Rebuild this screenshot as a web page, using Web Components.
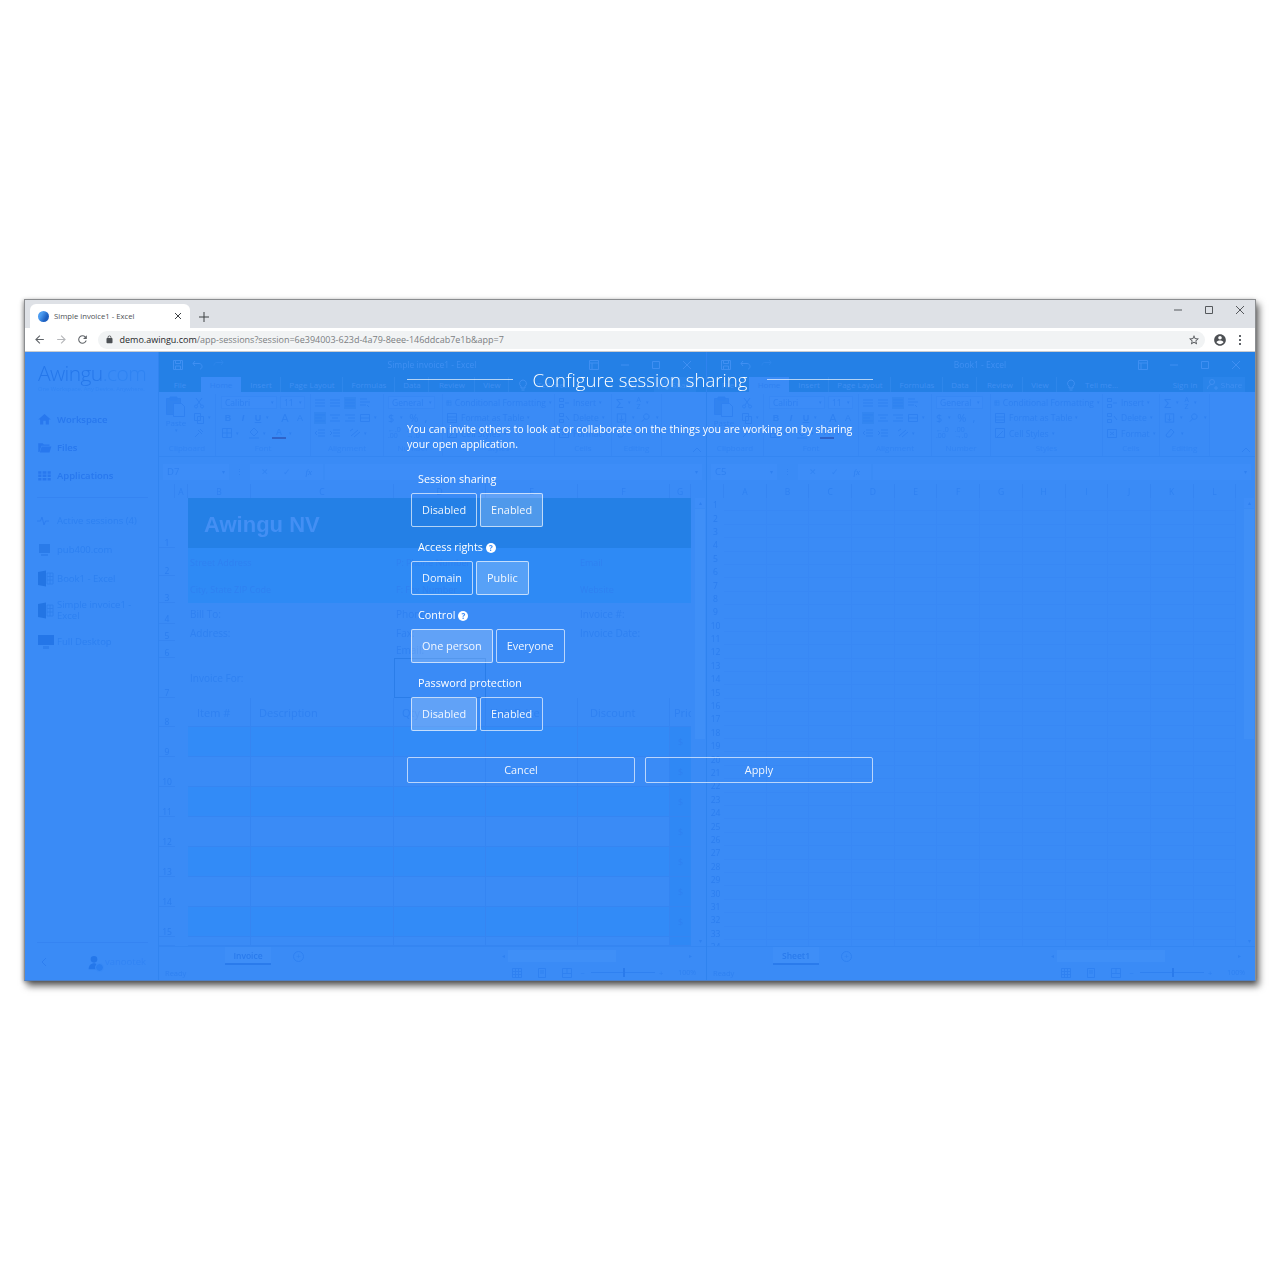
<!DOCTYPE html>
<html>
<head>
<meta charset="utf-8">
<title>Configure session sharing</title>
<style>
  body{
    margin:0;
    padding:299px 24px 0;
    min-height:1280px;
    box-sizing:border-box;
    background:#fff;
    font-family:"Open Sans","Liberation Sans",sans-serif;
    overflow:hidden;
  }
</style>
</head>
<body>
<browser-window>
  <awingu-desktop>
    <awingu-sidebar></awingu-sidebar>
    <excel-pane name="Simple invoice1 - Excel" sheet="Invoice" namebox="D7" tabx="66"><invoice-sheet></invoice-sheet></excel-pane>
    <excel-pane name="Book1 - Excel" sheet="Sheet1" namebox="C5" tabx="66"><blank-sheet></blank-sheet></excel-pane>
    <session-dialog></session-dialog>
  </awingu-desktop>
</browser-window>

<script>
const path = (d, size, vb = 24) => `<svg width="${size}" height="${size}" viewBox="0 0 ${vb} ${vb}" fill="currentColor"><path d="${d}"/></svg>`
const line = (d, w = 12, h = 12) => `<svg width="${w}" height="${h}" viewBox="0 0 ${w} ${h}" fill="none" stroke="currentColor" stroke-width="1"><path d="${d}"/></svg>`

class BrowserWindow extends HTMLElement {
    constructor(){
        super();
        this._shadowDom = this.attachShadow({mode:"open"})
    }
    connectedCallback() {
        this._shadowDom.innerHTML = `
        <style>
            :host{display:flex;flex-direction:column;width:1232px;height:682px;box-sizing:border-box;border:1px solid #8b8d90;border-bottom-color:#4b7fc7;box-shadow:3px 5px 7px rgba(0,0,0,.6),-1px 1px 4px rgba(0,0,0,.3);background:#fff}
            .strip{height:28px;background:#dee1e6;display:flex;align-items:flex-end;position:relative;flex:none;color:#45484c}
            .tab{width:160px;height:24px;margin-left:5px;background:#fff;border-radius:6px 6px 0 0;display:flex;align-items:center;box-sizing:border-box;padding:0 6px 0 8px;font-size:7.700px;color:#4d5054}
            .fav{width:11px;height:11px;border-radius:50%;background:linear-gradient(120deg,#4a9bf0 30%,#1c5fc0 70%);margin-right:5px;flex:none}
            .tab span{flex:1;white-space:nowrap}
            .tab svg{color:#3c4043}
            .plus{margin:0 0 5px 8px;color:#3c4043;display:flex}
            .ctrl{margin-left:auto;display:flex;align-self:flex-start;margin-top:4px;color:#55585c}
            .ctrl div{width:31px;height:12px;display:flex;justify-content:center;align-items:center}
            .bar{height:24px;flex:none;display:flex;align-items:center;background:#fff;color:#5f6368;border-bottom:1px solid #c9ccd0;box-sizing:border-box}
            .nav{width:21.5px;display:flex;justify-content:center}
            .nav.off{color:#b4b6b9}
            .omni{width:1107px;height:18px;margin-left:4px;border-radius:9px;background:#f1f3f4;display:flex;align-items:center;box-sizing:border-box;padding:0 5px 0 7px;font-size:9px;color:#7b7e82;white-space:nowrap}
            .omni b{font-weight:400;color:#25272a}
            .omni .lock{margin-right:6px;display:flex;color:#4d5054}
            .omni .star{margin-left:auto;display:flex;color:#4d5054}
            .prof{margin-left:8px;display:flex;color:#4d5054}
            .dots{margin-left:12px;display:flex;flex-direction:column;gap:2px}
            .dots i{width:2px;height:2px;background:#5f6368;display:block}
            .view{flex:1;min-height:0;display:flex}
        </style>
        <div class="strip">
            <div class="tab"><i class="fav"></i><span>Simple invoice1 - Excel</span>${line("M3 3l6 6M9 3l-6 6")}</div>
            <div class="plus">${line("M6 1v10M1 6h10")}</div>
            <div class="ctrl">
                <div>${line("M2 6h8")}</div>
                <div>${line("M2.5 2.5h7v7h-7z")}</div>
                <div>${line("M2 2l8 8M10 2l-8 8")}</div>
            </div>
        </div>
        <div class="bar">
            <div class="nav" style="margin-left:4px">${path("M20 11H7.83l5.59-5.59L12 4l-8 8 8 8 1.41-1.41L7.83 13H20v-2z",13)}</div>
            <div class="nav off">${path("M4 11h12.17l-5.59-5.59L12 4l8 8-8 8-1.41-1.41L16.17 13H4v-2z",13)}</div>
            <div class="nav">${path("M17.65 6.35A7.958 7.958 0 0 0 12 4c-4.42 0-7.99 3.58-7.99 8s3.57 8 7.99 8c3.73 0 6.84-2.55 7.73-6h-2.08A5.99 5.99 0 0 1 12 18c-3.31 0-6-2.69-6-6s2.69-6 6-6c1.66 0 3.14.69 4.22 1.78L13 11h7V4l-2.35 2.35z",13)}</div>
            <div class="omni">
                <span class="lock">${path("M18 8h-1V6c0-2.76-2.24-5-5-5S7 3.24 7 6v2H6c-1.1 0-2 .9-2 2v10c0 1.1.9 2 2 2h12c1.1 0 2-.9 2-2V10c0-1.1-.9-2-2-2zM9 6c0-1.66 1.34-3 3-3s3 1.34 3 3v2H9V6z",9)}</span>
                <span><b>demo.awingu.com</b>/app-sessions?session=6e394003-623d-4a79-8eee-146ddcab7e1b&amp;app=7</span>
                <span class="star">${path("M22 9.24l-7.19-.62L12 2 9.19 8.63 2 9.24l5.46 4.73L5.82 21 12 17.27 18.18 21l-1.63-7.03L22 9.24zM12 15.4l-3.76 2.27 1-4.28-3.32-2.88 4.38-.38L12 6.1l1.71 4.04 4.38.38-3.32 2.88 1 4.28L12 15.4z",12)}</span>
            </div>
            <div class="prof">${path("M12 2C6.48 2 2 6.48 2 12s4.48 10 10 10 10-4.48 10-10S17.52 2 12 2zm0 3c1.66 0 3 1.34 3 3s-1.34 3-3 3-3-1.34-3-3 1.34-3 3-3zm0 14.2c-2.5 0-4.71-1.28-6-3.22.03-1.99 4-3.08 6-3.08 1.99 0 5.97 1.09 6 3.08-1.29 1.94-3.5 3.22-6 3.22z",14)}</div>
            <div class="dots"><i></i><i></i><i></i></div>
        </div>
        <div class="view"><slot></slot></div>
        `
    }
}

class AwinguDesktop extends HTMLElement {
    constructor(){
        super();
        this.attachShadow({mode:"open"}).innerHTML = `
        <style>
            :host{display:flex;flex:1;position:relative;background:#3a8bf6;min-width:0}
        </style>
        <slot></slot>
        `
    }
}

class AwinguSidebar extends HTMLElement {
    constructor(){
        super();
        this.attachShadow({mode:"open"})
    }
    connectedCallback() {
        const xl = `<svg width="17" height="17" viewBox="0 0 17 17"><path d="M1 2l8-1.500v16L1 15z" fill="#2375e4"/><path d="M10 3h6v11h-6z" fill="none" stroke="#2f80ee"/><path d="M10 6.500h6M10 10h6M13 3v11" stroke="#2f80ee"/></svg>`
        this.shadowRoot.innerHTML = `
        <style>
            :host{display:flex;flex-direction:column;width:134px;flex:none;box-sizing:border-box;color:#2878ee;border-right:1px solid #3184f0;filter:blur(.3px)}
            .logo{height:53px;padding:7px 0 0 13px;box-sizing:border-box;font-size:21px;font-weight:300;line-height:28px;letter-spacing:-.6px;color:#2577ea;white-space:nowrap}
            .logo span{color:#2f83f2}
            .tag{font-size:5.800px;line-height:7px;letter-spacing:0;color:#3285f3;font-weight:400;margin-top:-1px}
            .it{height:28px;display:flex;align-items:center;padding-left:12px;font-size:9.500px;font-weight:600;white-space:nowrap}
            .ic{width:20px;display:flex;flex:none}
            hr{border:0;border-top:1px solid #3584f2;margin:8px 10px 8px 12px}
            .s{height:29px;font-weight:400;color:#2d80f1;padding-left:12px;display:flex;align-items:center;font-size:9.500px;line-height:11px}
            .s .ic{color:#2d7ef0}
            .end{margin-top:auto;height:38px;margin-left:12px;margin-right:10px;border-top:1px solid #3584f2;box-sizing:border-box;display:flex;align-items:center;font-size:9.500px;color:#3284f4}
            .chev{width:20px;margin-right:27px;display:flex;color:#2d7ef0;margin-left:2px}
            .who{position:relative;display:flex;color:#2477ea;margin-right:3px}
            .who i{position:absolute;right:-2px;bottom:-2px;width:9px;height:9px;border-radius:50%;background:#2b7ff1;border:1px solid #3a8bf6;box-sizing:border-box}
        </style>
        <div class="logo">Awingu<span>.com</span><div class="tag">One Workspace. Any Device. Anywhere.</div></div>
        <div class="it"><span class="ic">${path("M10 20v-6h4v6h5v-8h3L12 3 2 12h3v8z",15)}</span>Workspace</div>
        <div class="it"><span class="ic">${path("M2 5h7l2 2h9v2H7l-3 10H2zM7.500 10.500H23L20 20H4.500z",15)}</span>Files</div>
        <div class="it"><span class="ic">${path("M2 5h5v4H2zM9 5h6v4H9zM17 5h5v4h-5zM2 10.500h5v4H2zM9 10.500h6v4H9zM17 10.500h5v4h-5zM2 16h5v4H2zM9 16h6v4H9zM17 16h5v4h-5z",15)}</span>Applications</div>
        <hr>
        <div class="s"><span class="ic">${line("M0 6h3.500l1.500-4 2 8 1.500-4H12")}</span>Active sessions (4)</div>
        <div class="s"><span class="ic"><svg width="16" height="14" viewBox="0 0 16 14"><path d="M2 1h11v9H2z" fill="#2a7be9"/><path d="M4 11h7v2H4z" fill="#2f80ee"/></svg></span>pub400.com</div>
        <div class="s"><span class="ic">${xl}</span>Book1 - Excel</div>
        <div class="s" style="height:34px"><span class="ic">${xl}</span><span>Simple invoice1 -<br>Excel</span></div>
        <div class="s"><span class="ic"><svg width="18" height="16" viewBox="0 0 18 16"><path d="M1 1h16v10H1z" fill="#2476e8"/><path d="M6 12h6v3H6z" fill="#2f80ee"/></svg></span>Full Desktop</div>
        <div class="end">
            <span class="chev">${line("M7 2L3 6l4 4")}</span>
            <span class="who">${path("M12 3a5 5 0 1 1 0 10 5 5 0 0 1 0-10zM4 23c0-6 4-9 8-9s8 3 8 9z",16)}<i></i></span>
            vanootek
        </div>
        `
    }
}

class ExcelPane extends HTMLElement {
    constructor(){
        super();
        this.attachShadow({mode:"open"})
    }
    connectedCallback() {
        const tabs = [["File",42],["Home",40],["Insert",40],["Page Layout",62],["Formulas",52],["Data",34],["Review",46],["View",34]]
        this.shadowRoot.innerHTML = `
        <style>
            :host{display:flex;flex-direction:column;width:548px;flex:none;box-sizing:border-box;border-right:1px solid #2f83ef;color:#2f81f1;font-size:8px;white-space:nowrap;filter:blur(.3px)}
            :host(:last-of-type){flex:1;border-right:0}
            .top{height:40px;background:#2480e6;color:#3f8ff2;flex:none;display:flex;flex-direction:column}
            .title{height:25px;display:flex;align-items:center;position:relative;padding-left:13px;gap:8px}
            .name{position:absolute;left:0;width:546px;text-align:center;font-size:8.500px}
            .wc{margin-left:auto;display:flex;padding-right:4px}
            .wc div{width:31px;display:flex;justify-content:center}
            .tabs{height:15px;display:flex;align-items:stretch}
            .tabs div{display:flex;align-items:center;justify-content:center;flex:none}
            .tabs .on{background:#3a8bf6;color:#2f81f1}
            .tabs .sep{box-shadow:inset -1px 0 #2e86ea}
            .signin{margin-left:auto;width:36px}
            .share{width:42px;margin-right:10px;background:#2a84ea;gap:2px}
            .tell{width:28px}
            .fx{height:28px;flex:none;display:flex;align-items:center;box-sizing:border-box;padding:2px 4px 0;gap:0;border-top:1px solid #3486f2}
            .fx .box{height:16px;background:#3d8df8;display:flex;align-items:center;box-sizing:border-box;padding:0 4px;font-size:9.500px}
            .main{height:462px;flex:none;display:flex}
            .vs{width:12px;margin-left:auto;flex:none;box-sizing:border-box;margin-top:14px;display:flex;flex-direction:column;align-items:stretch;padding:0 1px}
            .vs b{height:10px;font-weight:400;font-size:6px;text-align:center;line-height:10px;background:#3d8df8;margin-bottom:1px}
            .vs i{height:230px;background:#3f8ff7;display:block}
            .vs u{margin-top:auto;height:9px;font-size:6px;text-align:center;text-decoration:none}
            .sheets{height:19px;flex:none;display:flex;align-items:center;font-size:8.500px;padding-left:${this.getAttribute("tabx")}px;box-sizing:border-box;border-top:1px solid #3486f2}
            .sheet{font-weight:600;width:46px;height:18px;align-self:flex-start;line-height:17px;text-align:center;color:#2a7bec;border-bottom:2px solid #2a7bec;box-sizing:border-box;background:#3e8ef7}
            .add{margin-left:22px;width:9px;height:9px;border:1px solid #2f81f1;border-radius:50%;text-align:center;line-height:8px;font-size:8px}
            .hs{margin-left:auto;width:190px;margin-right:14px;height:12px;display:flex;align-items:center;gap:3px;font-size:6px}
            .hs i{flex:none;width:108px;height:12px;background:#3f8ff7;display:block}
            .status{height:15px;flex:none;display:flex;align-items:center;padding-left:6px;font-size:7.500px;color:#2f81f1;position:relative}
            .views{margin-left:auto;display:flex;align-items:center;padding-right:10px;color:#2f81f1}
            .views span{width:25px;display:flex;justify-content:center}
            .slider{width:64px;height:1px;background:#2f81f1;margin:0 10px 0 6px;position:relative}
            .slider i{position:absolute;left:32px;top:-4px;width:2px;height:9px;background:#2a7bec}
        </style>
        <div class="top">
            <div class="title">
                ${line("M1.500 1.500h9v9h-9zM3.500 1.500v3h5v-3M3.500 10.500v-3.500h5v3.500")}
                ${line("M3 2L1 4.500l2 2.500M1 4.500h6c2 0 3 1.500 3 3s-1 2.500-2 2.500")}
                <span style="opacity:.35">${line("M9 2l2 2.500L9 7M11 4.500H5c-2 0-3 1.500-3 3")}</span>
                <span class="name">${this.getAttribute("name")}</span>
                <div class="wc">
                    <div>${line("M1.500 1.500h9v9h-9zM1.500 4h9M4 4v6.500")}</div>
                    <div>${line("M2 6h8")}</div>
                    <div>${line("M2.500 2.500h7v7h-7z")}</div>
                    <div>${line("M2 2l8 8M10 2l-8 8")}</div>
                </div>
            </div>
            <div class="tabs">
                ${tabs.map(t => `<div class="${t[0] == "Home" ? "on" : (t[0] == "File" ? "" : "sep")}" style="width:${t[1]}px">${t[0]}</div>`).join("")}
                <div class="tell">${line("M6 1a3.500 3.500 0 0 1 2 6.300V9H4V7.300A3.500 3.500 0 0 1 6 1zM4.500 11h3")}</div>
                <div>Tell me...</div>
                <div class="signin">Sign in</div>
                <div class="share">${line("M6 1.500a2.500 2.500 0 1 1 0 5 2.500 2.500 0 0 1 0-5zM1.500 11c0-3 2-4.500 4.500-4.500M8 10h4M10 8v4",13,13)}Share</div>
            </div>
        </div>
        <excel-ribbon></excel-ribbon>
        <div class="fx">
            <div class="box" style="width:66px;justify-content:space-between">${this.getAttribute("namebox")}<span style="font-size:6px">&#9662;</span></div>
            <div style="width:21px;text-align:center;font-size:7px">&#8942;</div>
            <div class="box" style="width:73px;justify-content:space-around;font-size:9px"><span style="opacity:.7">&#10005;</span><span style="opacity:.7">&#10003;</span><i style="font-family:'Liberation Serif',serif">fx</i></div>
            <div class="box" style="flex:1;margin-left:2px;justify-content:flex-end"><span style="font-size:6px">&#9662;</span></div>
        </div>
        <div class="main">
            <slot></slot>
            <div class="vs"><b>&#9652;</b><i></i><u>&#9662;</u></div>
        </div>
        <div class="sheets">
            <span class="sheet">${this.getAttribute("sheet")}</span>
            <span class="add">+</span>
            <div class="hs">&#9666;<i></i><span style="margin-left:auto">&#9656;</span></div>
        </div>
        <div class="status">
            Ready
            <div class="views">
                <span>${line("M1.500 1.500h9v9h-9zM1.500 4.500h9M1.500 7.500h9M4.500 1.500v9M7.500 1.500v9")}</span>
                <span>${line("M2.500 1.500h7v9h-7zM4 4h4M4 6h4")}</span>
                <span>${line("M1.500 1.500h9v9h-9zM6 1.500v5M1.500 6.500h9")}</span>
                <span style="width:auto;margin-left:1px">&#8722;</span>
                <div class="slider"><i></i></div>
                <span style="width:auto;margin-left:-6px">+</span>
                <span style="width:auto;margin-left:15px;font-size:7px">100%</span>
            </div>
        </div>
        `
    }
}

class ExcelRibbon extends HTMLElement {
    constructor(){
        super();
        this.attachShadow({mode:"open"})
    }
    connectedCallback() {
        const lines = d => line(d)
        const al = () => lines("M1 3h10M1 6h10M1 9h10")
        const drop = `<span class="dr">&#9662;</span>`
        this.shadowRoot.innerHTML = `
        <style>
            :host{display:grid;grid-template-columns:57px 95px 73px 59px 112px 57px 50px 1fr;height:64px;flex:none;color:#2f81f1;font-size:8.500px;white-space:nowrap}
            .g{border-right:1px solid #3687f4;display:flex;flex-direction:column;min-width:0;margin-top:2px}
            .b{height:47px;padding:1px 2px 0 5px;box-sizing:border-box}
            .r{height:15.300px;display:flex;align-items:center;gap:3px}
            .l{height:15px;text-align:center;line-height:14px;font-size:8px;color:#3284f3}
            .cb{height:13px;border:1px solid #3788f5;background:#3c8cf7;display:flex;align-items:center;padding:0 2px 0 3px;box-sizing:border-box;justify-content:space-between}
            .dr{font-size:5px;line-height:5px}
            .bi{font-family:"Liberation Sans",sans-serif;font-weight:700;font-size:9px;width:14px;text-align:center}
            .paste{width:34px;display:flex;flex-direction:column;align-items:center;color:#2f81f1;font-size:8px;line-height:10px}
            .last{border-right:0}
            .hi{background:#3386f1;display:flex}
        </style>
        <div class="g">
            <div class="b" style="display:flex;padding-left:0">
                <div class="paste">
                    <svg width="24" height="23" viewBox="0 0 24 23" fill="none" stroke="currentColor"><path d="M2.500 3.500h14v16h-14z" fill="#3183f0"/><path d="M6 2h7v3H6z" fill="#2f81f1"/><path d="M9.500 8.500h8l3 3v10h-11z" fill="#3a8bf6"/></svg>
                    Paste
                    <span class="dr">&#9662;</span>
                </div>
                <div>
                    <div class="r">${lines("M3 1l5 7M9 1L4 8M3 8a1.500 1.500 0 1 0 .1 0zM9 8a1.500 1.500 0 1 0 .1 0z")}</div>
                    <div class="r">${lines("M1.500 1.500h6v7h-6zM4.500 4.500h6v7h-6z")}${drop}</div>
                    <div class="r">${lines("M2 10l4-4M5 3l4 4M7 2l3 3")}</div>
                </div>
            </div>
            <div class="l">Clipboard</div>
        </div>
        <div class="g">
            <div class="b">
                <div class="r"><div class="cb" style="width:56px">Calibri${drop}</div><div class="cb" style="width:25px">11${drop}</div></div>
                <div class="r" style="gap:1px"><span class="bi">B</span><span class="bi" style="font-style:italic">I</span><span class="bi" style="text-decoration:underline">U</span>${drop}<span class="bi" style="margin-left:8px;font-weight:400;font-size:11px">A</span><span class="bi" style="font-weight:400">A</span></div>
                <div class="r" style="gap:3px">${lines("M1.500 1.500h9v9h-9zM6 1.500v9M1.500 6h9")}${drop}<span style="margin-left:6px;display:flex;color:#2f81f1">${lines("M6 1l4 4-4 4-4-4zM1 11h10")}</span>${drop}<span class="bi" style="margin-left:3px;border-bottom:2px solid #2f63c8;line-height:9px">A</span>${drop}</div>
            </div>
            <div class="l">Font</div>
        </div>
        <div class="g">
            <div class="b" style="padding-left:3px">
                <div class="r" style="gap:3px">${al()}${al()}<span class="hi">${al()}</span>${lines("M1 2h7M1 5h10M1 8h6M8 8l2 2")}</div>
                <div class="r" style="gap:3px"><span class="hi">${lines("M1 3h10M1 6h7M1 9h10")}</span>${lines("M1 3h10M3 6h6M1 9h10")}${lines("M1 3h10M4 6h7M1 9h10")}${lines("M1.500 2.500h9v7h-9zM1.500 6h9")}${drop}</div>
                <div class="r" style="gap:3px">${lines("M4 3h7M4 6h7M4 9h7M3 4L1 6l2 2")}${lines("M4 3h7M4 6h7M4 9h7M1 4l2 2-2 2")}<span style="margin-left:5px;display:flex">${lines("M2 9l7-6M5 10l6-5M1 4l3-2")}</span>${drop}</div>
            </div>
            <div class="l">Alignment</div>
        </div>
        <div class="g">
            <div class="b" style="padding-left:4px">
                <div class="r"><div class="cb" style="width:47px">General${drop}</div></div>
                <div class="r" style="gap:6px;font-size:11px"><span>$</span>${drop}<span>%</span><span>,</span></div>
                <div class="r" style="font-size:7px;gap:6px;line-height:6px"><span>&#8592;.0<br>.00</span><span>.00<br>&#8594;.0</span></div>
            </div>
            <div class="l">Number</div>
        </div>
        <div class="g">
            <div class="b" style="padding-left:3px">
                <div class="r">${lines("M1.500 1.500h9v9h-9zM1.500 5h9M5 1.500v9")}Conditional Formatting ${drop}</div>
                <div class="r">${lines("M1.500 1.500h9v9h-9zM1.500 5h9M1.500 8h9")}Format as Table ${drop}</div>
                <div class="r">${lines("M1.500 1.500h9v9h-9zM3 10l6-6")}Cell Styles ${drop}</div>
            </div>
            <div class="l">Styles</div>
        </div>
        <div class="g">
            <div class="b" style="padding-left:3px">
                <div class="r">${lines("M1.500 1.500h4v3h-4zM1.500 7.500h4v3h-4zM7 6h4")}Insert ${drop}</div>
                <div class="r">${lines("M1.500 1.500h4v3h-4zM1.500 7.500h4v3h-4zM8 4l3 4")}Delete ${drop}</div>
                <div class="r">${lines("M1.500 2.500h9v8h-9zM4 5l4 3M8 5l-4 3")}Format ${drop}</div>
            </div>
            <div class="l">Cells</div>
        </div>
        <div class="g">
            <div class="b" style="padding-left:4px">
                <div class="r" style="gap:5px"><span style="font-size:13px;line-height:12px">&#931;</span>${drop}<span style="font-size:7px;line-height:7px">A<br>Z</span>${drop}</div>
                <div class="r" style="gap:5px">${lines("M1.500 1.500h9v9h-9zM6 3v6M4 7l2 2 2-2")}${drop}${lines("M7 1.500a3 3 0 1 1-.1 0zM5 7l-3 3")}${drop}</div>
                <div class="r" style="gap:5px">${lines("M2 8l5-6 3 3-4 5H3z")}${drop}</div>
            </div>
            <div class="l">Editing</div>
        </div>
        <div class="g last" style="align-items:flex-end;justify-content:flex-end;padding:0 3px 2px 0">${line("M2 8l4-4 4 4",12,10)}</div>
        `
    }
}

// shared bits for the two worksheets
const sheetBase = `
    :host{display:grid;flex:none;color:#2f81f1;font-size:9px;white-space:nowrap;overflow:hidden}
    .h{display:flex;align-items:center;justify-content:center;font-size:8.500px;color:#2f81f1;border-right:1px solid #3585f2;box-sizing:border-box}
    .n{display:flex;align-items:flex-end;justify-content:center;box-sizing:border-box;border-bottom:1px solid #3585f2;font-size:8.500px;line-height:9px;color:#2c7eef}
    .c{box-sizing:border-box;overflow:visible;display:flex;align-items:center}
    .c span{position:relative;z-index:1}
`

class InvoiceSheet extends HTMLElement {
    constructor(){
        super();
        this.attachShadow({mode:"open"})
    }
    connectedCallback() {
        const heights = [50,28,27,21,17,17,40,29,30,30,30,30,30,30,30,9]
        const dark = "#2480e6", mid = "#2e8af5", alt = "#328bf7", dollar = "#2f88f5"
        // text of the rows, by column B..G
        const data = {
            2: ["Street Address","","P: Phone Number","","Email",""],
            3: ["City, State ZIP Code","","F: Fax Number","","Website",""],
            4: ["Bill To:","","Phone:","","Invoice #:",""],
            5: ["Address:","","Fax:","","Invoice Date:",""],
            6: ["","","Email:","","",""],
            7: ["Invoice For:","","","","",""],
            8: ["Item #","Description","Qty","Unit Price","Discount","Price"]
        }
        let html = `<div class="h"></div><div class="h">A</div>`
        for (const c of ["B","C","D","E","F","G"]) html += `<div class="h">${c}</div>`
        heights.forEach((h, i) => {
            const row = i + 1
            html += `<div class="n">${row < 16 ? row : ""}</div><div class="c"></div>`
            for (let col = 0; col < 6; col++) {
                let bg = "transparent", extra = "", text = data[row] ? data[row][col] : ""
                if (row == 1) bg = dark
                if (row == 2 || row == 3) bg = mid
                if (row > 8 && row % 2 == 1) bg = alt
                if (row > 8 && col == 5) { bg = dollar; text = row < 16 ? "$" : ""; extra = "justify-content:center;" }
                if (row >= 8) extra += "border-bottom:1px solid #3585f2;" + (col < 5 ? "border-right:1px solid #3585f2;" : "")
                if (row == 8) extra += "font-size:11px;padding-left:" + [9,8,8,4,12,4][col] + "px;"
                else if (row == 7 && col == 2) extra += "border:1px solid #2a7de9;"
                else if (row < 8) extra += "padding-left:2px;"
                if (row > 3 && row < 8) extra += "font-size:10px;"
                if (row == 1 && col == 0) text = `<b class="co">Awingu NV</b>`
                html += `<div class="c" style="background:${bg};${extra}"><span>${text}</span></div>`
            }
        })
        this.shadowRoot.innerHTML = `
        <style>
            ${sheetBase}
            :host{grid-template-columns:16px 13px 63px 143px 92px 92px 92px 21px;grid-template-rows:14px ${heights.map(h => h + "px").join(" ")};height:462px}
            .co{font-family:"Liberation Sans",sans-serif;font-size:22px;color:#438ff4;padding-left:14px;position:relative;top:2px}
        </style>
        ${html}
        `
    }
}

class BlankSheet extends HTMLElement {
    constructor(){
        super();
        this.attachShadow({mode:"open"})
    }
    connectedCallback() {
        const cols = "ABCDEFGHIJKL".split("")
        let html = `<div class="h"></div>` + cols.map(c => `<div class="h">${c}</div>`).join("")
        for (let r = 1; r <= 34; r++) {
            html += `<div class="n">${r}</div>` + cols.map(() => `<div class="c g"></div>`).join("")
        }
        this.shadowRoot.innerHTML = `
        <style>
            ${sheetBase}
            :host{grid-template-columns:17px repeat(12,42.700px);grid-template-rows:14px repeat(34,13.400px);height:462px;align-content:start}
            .n{border-bottom:0;align-items:center;font-size:8.500px}
            .g{border-right:1px solid #3888f5;border-bottom:1px solid #3888f5}
        </style>
        ${html}
        `
    }
}

class ToggleButton extends HTMLElement {
    constructor(){
        super();
        this.attachShadow({mode:"open"}).innerHTML = `
        <style>
            :host{display:inline-flex;align-items:center;height:34px;box-sizing:border-box;padding:0 10px 2px;border:1px solid rgba(255,255,255,.65);border-radius:2px;font-size:10.900px;color:rgba(255,255,255,.92)}
            :host([active]){background:rgba(255,255,255,.2)}
        </style>
        <slot></slot>
        `
    }
}

class OptionGroup extends HTMLElement {
    constructor(){
        super();
        this.attachShadow({mode:"open"})
    }
    connectedCallback() {
        const help = this.hasAttribute("help") ? `<i class="q">?</i>` : ""
        this.shadowRoot.innerHTML = `
        <style>
            :host{display:block;padding-left:4px;margin-bottom:11px}
            .label{height:17px;line-height:17px;margin:0 0 6px 7px;font-size:10.800px;color:#fff;display:flex;align-items:center;gap:3px}
            .q{width:10px;height:10px;border-radius:50%;background:#fff;color:#3a8bf6;font:700 8px/10px "Open Sans",sans-serif;text-align:center;margin-top:2px}
            .btns{display:flex;gap:3px}
        </style>
        <div class="label">${this.getAttribute("label")}${help}</div>
        <div class="btns"><slot></slot></div>
        `
    }
}

class SessionDialog extends HTMLElement {
    constructor(){
        super();
        this._shadowDom = this.attachShadow({mode:"open"})
    }
    connectedCallback() {
        this._shadowDom.innerHTML = `
        <style>
            :host{position:absolute;left:382px;top:15px;width:466px;color:#fff;display:block}
            .head{display:flex;align-items:center;gap:20px;height:24px;font-size:18.600px;font-weight:300;white-space:nowrap}
            .head i{flex:1;height:1px;background:rgba(255,255,255,.65)}
            p{margin:31px 0 18px;font-size:10.650px;line-height:15px}
            .actions{display:flex;gap:10px;margin-top:26px}
            .actions div{flex:1;height:26px;box-sizing:border-box;border:1px solid rgba(255,255,255,.65);border-radius:2px;display:flex;align-items:center;justify-content:center;padding-bottom:2px;font-size:10.900px;color:rgba(255,255,255,.92)}
        </style>
        <div class="head"><i></i>Configure session sharing<i></i></div>
        <p>You can invite others to look at or collaborate on the things you are working on by sharing your open application.</p>
        <option-group label="Session sharing">
            <toggle-button>Disabled</toggle-button><toggle-button active>Enabled</toggle-button>
        </option-group>
        <option-group label="Access rights" help>
            <toggle-button>Domain</toggle-button><toggle-button active>Public</toggle-button>
        </option-group>
        <option-group label="Control" help>
            <toggle-button active>One person</toggle-button><toggle-button>Everyone</toggle-button>
        </option-group>
        <option-group label="Password protection">
            <toggle-button active>Disabled</toggle-button><toggle-button>Enabled</toggle-button>
        </option-group>
        <div class="actions"><div>Cancel</div><div>Apply</div></div>
        `
    }
}

window.customElements.define("browser-window", BrowserWindow)
window.customElements.define("awingu-desktop", AwinguDesktop)
window.customElements.define("awingu-sidebar", AwinguSidebar)
window.customElements.define("excel-pane", ExcelPane)
window.customElements.define("excel-ribbon", ExcelRibbon)
window.customElements.define("invoice-sheet", InvoiceSheet)
window.customElements.define("blank-sheet", BlankSheet)
window.customElements.define("toggle-button", ToggleButton)
window.customElements.define("option-group", OptionGroup)
window.customElements.define("session-dialog", SessionDialog)
</script>
</body>
</html>
